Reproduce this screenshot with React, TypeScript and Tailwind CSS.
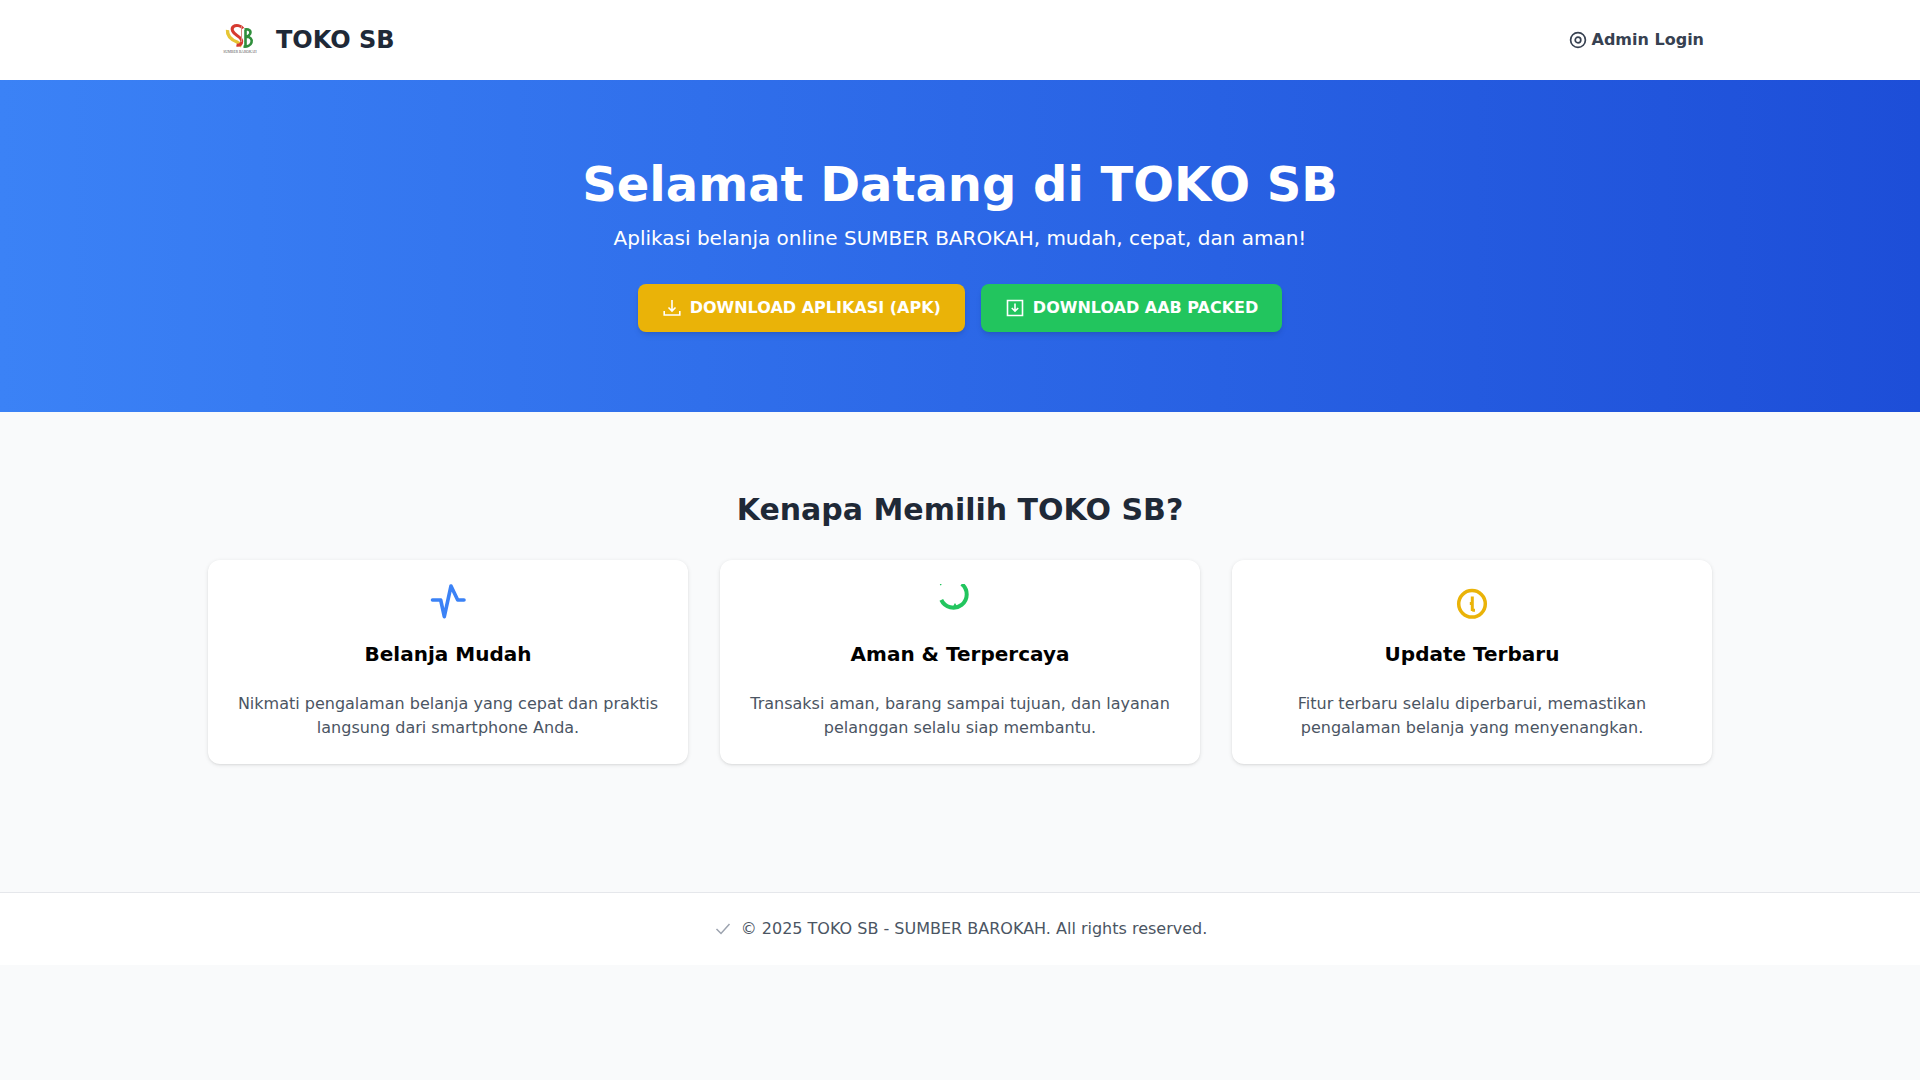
import React from "react";

function Logo() {
  return (
    <svg viewBox="0 0 48 48" className="w-12 h-12 shrink-0">
      <path d="M11.5 14 C11 20 16 24 21 26 C24 27.5 24.5 29 23.5 30.5" fill="none" stroke="#e6c534" strokeWidth="3.4" />
      <path d="M27 12.5 C25 9.5 20 8.5 17.5 10.5 C14.5 13 17 17 21 19.5 C24 21.5 27 24 25.5 27 C24.5 29 22.5 29.5 20.5 29" fill="none" stroke="#d63a30" strokeWidth="3" />
      <path d="M25.5 9 V26" stroke="#d98a80" strokeWidth="1" />
      <path d="M28.5 13.5 C33 12.5 35.5 15 34 18 C33.2 19.5 31.5 20.5 30.5 20.8 C34 21 36.5 23 35.5 26.5 C34.5 29.5 31 31 27.5 30.5 M29.5 14 V30" fill="none" stroke="#2f8f3c" strokeWidth="2.6" />
      <text x="24" y="36.6" textAnchor="middle" fontSize="3.6" fontFamily="'Liberation Serif', serif" fill="#555">SUMBER BAROKAH</text>
    </svg>
  );
}

function Feature({ icon, title, text }: { icon: React.ReactNode; title: string; text: string }) {
  return (
    <div className="bg-white rounded-xl shadow-[0_1px_4px_rgba(0,0,0,0.1),0_1px_2px_rgba(0,0,0,0.05)] p-6 flex flex-col items-center text-center">
      <div className="w-12 h-12 mb-2">{icon}</div>
      <h3 className="text-xl leading-7 font-bold text-black mb-6">{title}</h3>
      <p className="text-base leading-6 text-[#4b5563]">{text}</p>
    </div>
  );
}

export default function App() {
  return (
    <div className="min-h-screen bg-[#f9fafb] font-['DejaVu_Sans',sans-serif]">
      <header className="bg-white h-20">
        <div className="max-w-[1536px] mx-auto h-full px-6 flex items-center justify-between">
          <div className="flex items-center gap-3">
            <Logo />
            <span className="text-2xl font-bold text-[#1f2937]">TOKO SB</span>
          </div>
          <a className="flex items-center gap-[5px] text-base font-bold text-[#374151]">
            <svg viewBox="0 0 18 18" className="w-[18px] h-[18px]" fill="none" stroke="#374151" strokeWidth="1.7">
              <circle cx="9" cy="9" r="7.4" />
              <circle cx="9" cy="9" r="2.8" />
            </svg>
            Admin Login
          </a>
        </div>
      </header>

      <section className="bg-[linear-gradient(to_right,#3b82f6,#1d4ed8)] py-20 text-center text-white">
        <h1 className="text-5xl leading-12 font-bold mb-4">Selamat Datang di TOKO SB</h1>
        <p className="text-xl leading-7 mb-8">Aplikasi belanja online SUMBER BAROKAH, mudah, cepat, dan aman!</p>
        <div className="flex justify-center gap-4">
          <a className="h-12 flex items-center gap-2 px-6 rounded-lg bg-[#eab308] font-bold text-base uppercase shadow-md">
            <svg viewBox="0 0 20 20" className="w-5 h-5" fill="none" stroke="white" strokeWidth="1.6">
              <path d="M10 2 V13 M6.5 9.5 L10 13 L13.5 9.5 M2.2 13 V17 H17.8 V13" />
            </svg>
            Download Aplikasi (APK)
          </a>
          <a className="h-12 flex items-center gap-2 px-6 rounded-lg bg-[#22c55e] font-bold text-base uppercase shadow-md">
            <svg viewBox="0 0 20 20" className="w-5 h-5" fill="none" stroke="white" strokeWidth="1.6">
              <path d="M2.5 2.5 H17.5 V17.5 H2.5 Z M10 5.5 V13 M6.8 10 L10 13.2 L13.2 10" />
            </svg>
            Download AAB Packed
          </a>
        </div>
      </section>

      <main className="max-w-[1536px] mx-auto px-4 py-20 mb-12">
        <h2 className="text-3xl leading-9 font-bold text-[#1f2937] text-center mb-8">Kenapa Memilih TOKO SB?</h2>
        <div className="grid grid-cols-3 gap-8">
          <Feature
            title="Belanja Mudah"
            text="Nikmati pengalaman belanja yang cepat dan praktis langsung dari smartphone Anda."
            icon={
              <svg viewBox="0 0 48 48" className="w-12 h-12" fill="none" stroke="#3b82f6" strokeWidth="3.6" strokeLinejoin="round" strokeLinecap="round">
                <path d="M8.5 16 H16.7 L20.3 32.7 L27 2 L33.7 16 H40" />
              </svg>
            }
          />
          <Feature
            title="Aman & Terpercaya"
            text="Transaksi aman, barang sampai tujuan, dan layanan pelanggan selalu siap membantu."
            icon={
              <svg viewBox="0 0 48 48" className="w-12 h-12" fill="none" stroke="#22c55e" strokeWidth="4">
                <path d="M25.7 0 A13.3 13.3 0 1 1 5.3 15.9" />
                <path d="M16 24 L19 19 L22 24 Z" fill="#22c55e" stroke="none" />
                <circle cx="4.7" cy="0.6" r="0.8" fill="#22c55e" stroke="none" />
              </svg>
            }
          />
          <Feature
            title="Update Terbaru"
            text="Fitur terbaru selalu diperbarui, memastikan pengalaman belanja yang menyenangkan."
            icon={
              <svg viewBox="0 0 48 48" className="w-12 h-12" fill="none" stroke="#eab308" strokeWidth="3.5">
                <circle cx="24" cy="19.8" r="13.3" />
                <path d="M24.3 12.5 V27 M21.8 19.5 H24.3 M24.3 26.3 H27" strokeWidth="3" />
              </svg>
            }
          />
        </div>
      </main>

      <footer className="bg-white border-t border-[#e5e7eb] py-6 pl-0.5 flex items-center justify-center gap-2.5 text-base leading-6 text-[#4b5563]">
        <svg viewBox="0 0 16 16" className="w-4 h-4" fill="none" stroke="#9ca3af" strokeWidth="1.5">
          <path d="M1.5 8 L6 12.5 L14.5 3" />
        </svg>
        <span>© 2025 TOKO SB - SUMBER BAROKAH. All rights reserved.</span>
      </footer>
    </div>
  );
}
